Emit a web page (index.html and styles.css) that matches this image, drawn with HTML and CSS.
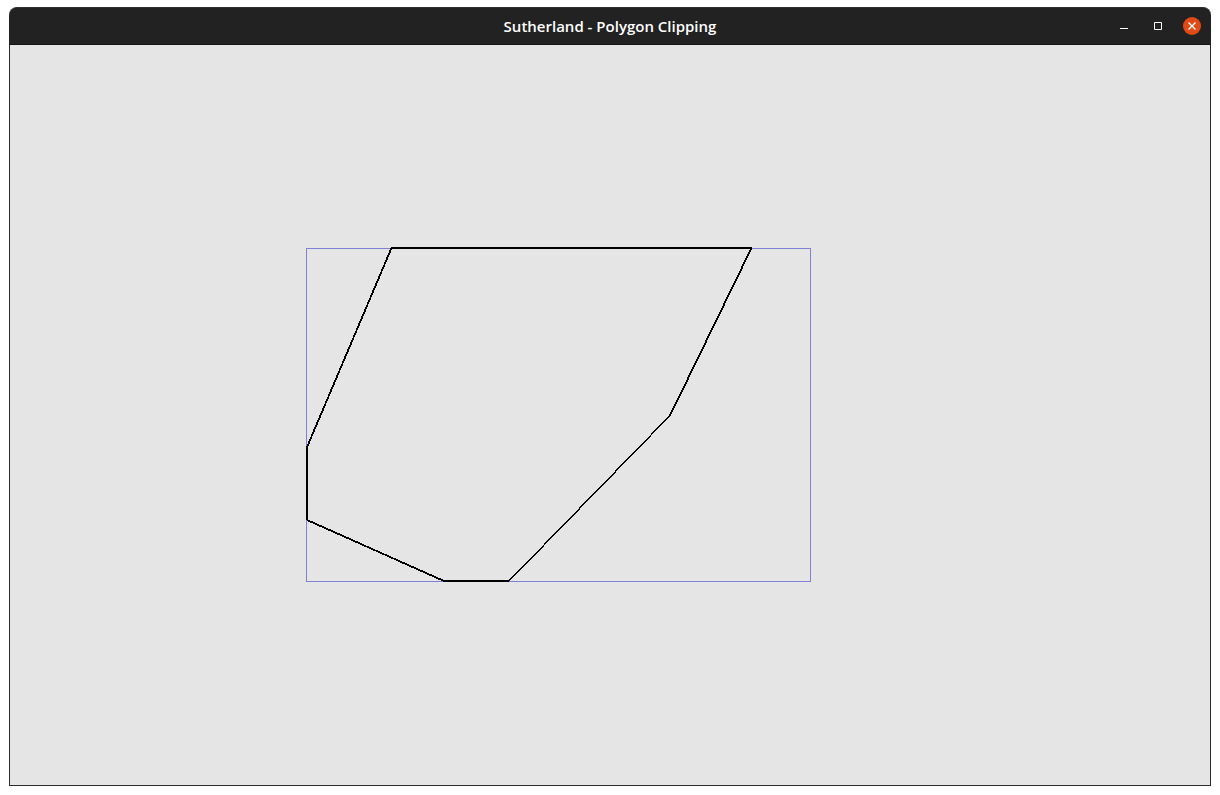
FILE: index.html
```html
<!DOCTYPE html>
<html lang="en">
<head>
<meta charset="utf-8">
<title>Sutherland - Polygon Clipping</title>
<link rel="stylesheet" href="styles.css">
</head>
<body>
<main class="window">
  <header class="titlebar">
    <h1 class="title">Sutherland - Polygon Clipping</h1>
    <div class="controls">
      <button class="control" type="button" aria-label="Minimize">
        <svg class="icon" viewBox="0 0 18 18"><path class="fill" d="M5 11h8v1H5z"/></svg>
      </button>
      <button class="control" type="button" aria-label="Maximize">
        <svg class="icon" viewBox="0 0 18 18"><path class="line" d="M5.500 5.500h7v7h-7z"/></svg>
      </button>
      <button class="control close" type="button" aria-label="Close">
        <svg class="icon" viewBox="0 0 18 18"><path class="cross" d="M5.500 5.500l7 7M12.500 5.500l-7 7"/></svg>
      </button>
    </div>
  </header>
  <section class="viewport">
    <svg class="scene" viewBox="0 0 1200 740" role="img" aria-label="Polygon clipped to a rectangle">
      <rect class="clip" x="296.500" y="203.500" width="504" height="333"/>
      <g class="edges">
        <path class="straight" d="M381 203H741.500M297 401V475M433 536H499"/>
        <path class="steep" d="M741.500 203L660 370.500M381.500 203L297.500 401M297 475L434 536"/>
        <path class="diagonal" d="M660 370.500L499 536"/>
      </g>
    </svg>
  </section>
</main>
</body>
</html>
```
FILE: styles.css
```css
* {
  box-sizing: border-box;
}

body {
  margin: 0;
  background: #fff;
  font-family: "Open Sans", "Noto Sans", sans-serif;
}

.window {
  display: flex;
  flex-direction: column;
  height: 100vh;
  padding: 7px 9px 9px;
}

.titlebar {
  display: grid;
  grid-template-columns: 1fr auto 1fr;
  align-items: center;
  height: 38px;
  padding: 0 10px;
  background: #222;
  border-top: 1px solid #303030;
  border-bottom: 1px solid #151515;
  border-radius: 8px 8px 0 0;
}

.title {
  grid-column: 2;
  margin: 0;
  color: #fff;
  font-size: 15px;
  font-weight: 600;
  line-height: 20px;
}

.controls {
  display: flex;
  justify-content: flex-end;
  gap: 16px;
}

.control {
  width: 18px;
  height: 18px;
  padding: 0;
  border: 0;
  border-radius: 50%;
  background: transparent;
}

.close {
  background: #e24a15;
}

.icon {
  display: block;
  width: 18px;
  height: 18px;
}

.fill {
  fill: #fff;
}

.line {
  fill: none;
  stroke: #fff;
}

.cross {
  fill: none;
  stroke: #fff;
  stroke-width: 1.4;
}

.viewport {
  flex: 1;
  min-height: 0;
  background: #e5e5e5;
  border: 1px solid #2b2b2b;
  border-top: 0;
}

.scene {
  display: block;
  width: 100%;
  height: 100%;
  shape-rendering: crispEdges;
}

.clip {
  fill: none;
  stroke: #8080d9;
}

.edges {
  fill: none;
  stroke: #000;
}

.straight {
  stroke-width: 2;
}

.steep {
  stroke-width: 1.8;
}

.diagonal {
  stroke-width: 1.4;
}
```
